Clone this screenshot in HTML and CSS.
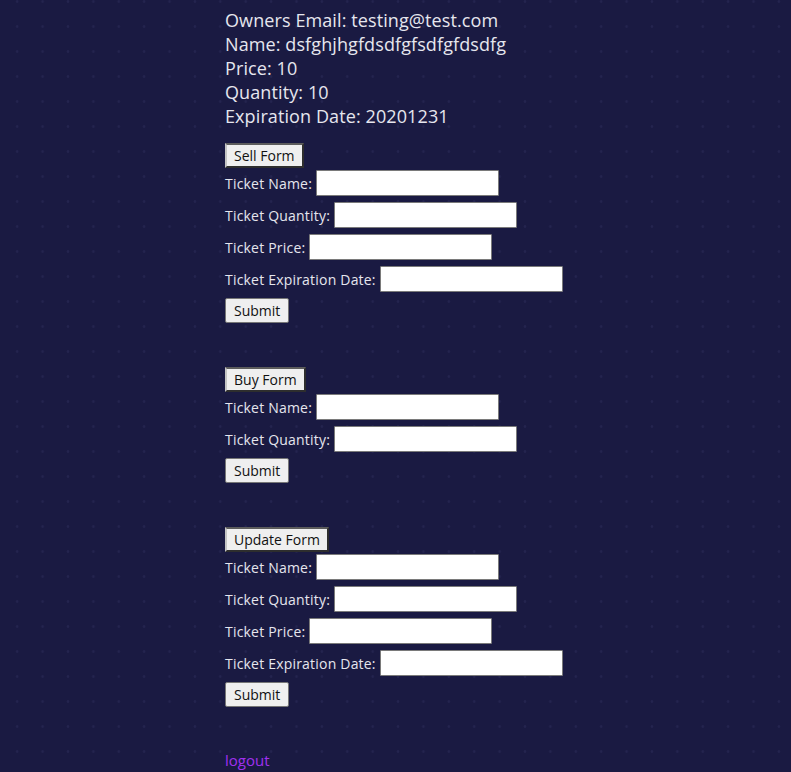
FILE: index.html
```html
<!DOCTYPE html>
<html lang="en">
<head>
<meta charset="utf-8">
<title>Tickets</title>
<link rel="stylesheet" href="styles.css">
</head>
<body>
<main class="page">
  <section class="info">
    <div>Owners Email: testing@test.com</div>
    <div>Name: dsfghjhgfdsdfgfsdfgfdsdfg</div>
    <div>Price: 10</div>
    <div>Quantity: 10</div>
    <div>Expiration Date: 20201231</div>
  </section>

  <section class="panel panel-first">
    <button class="toggle" type="button">Sell Form</button>
    <form class="ticket-form">
      <div class="row"><label>Ticket Name:</label><input type="text" class="field"></div>
      <div class="row"><label>Ticket Quantity:</label><input type="text" class="field"></div>
      <div class="row"><label>Ticket Price:</label><input type="text" class="field"></div>
      <div class="row"><label>Ticket Expiration Date:</label><input type="text" class="field"></div>
      <button class="submit" type="button">Submit</button>
    </form>
  </section>

  <section class="panel">
    <button class="toggle" type="button">Buy Form</button>
    <form class="ticket-form">
      <div class="row"><label>Ticket Name:</label><input type="text" class="field"></div>
      <div class="row"><label>Ticket Quantity:</label><input type="text" class="field"></div>
      <button class="submit" type="button">Submit</button>
    </form>
  </section>

  <section class="panel">
    <button class="toggle" type="button">Update Form</button>
    <form class="ticket-form">
      <div class="row"><label>Ticket Name:</label><input type="text" class="field"></div>
      <div class="row"><label>Ticket Quantity:</label><input type="text" class="field"></div>
      <div class="row"><label>Ticket Price:</label><input type="text" class="field"></div>
      <div class="row"><label>Ticket Expiration Date:</label><input type="text" class="field"></div>
      <button class="submit" type="button">Submit</button>
    </form>
  </section>

  <a class="logout" href="#">logout</a>
</main>
</body>
</html>
```

FILE: styles.css
```css
html {
  background-color: #1a1a42;
  background-image: radial-gradient(circle, #24244f 0, #24244f 1px, rgba(26,26,66,0) 1.6px);
  background-size: 25.4px 25px;
  background-position: 4.5px 14px;
  min-height: 100%;
}

body {
  margin: 0;
  font-family: "Open Sans", "Noto Sans", sans-serif;
  color: #e6e6ee;
}

.page {
  display: flex;
  flex-direction: column;
  align-items: flex-start;
  padding: 8px 0 0 225px;
}

.info {
  font-size: 18px;
  line-height: 24px;
  letter-spacing: 0.1px;
}

.panel {
  display: flex;
  flex-direction: column;
  align-items: flex-start;
  margin-top: 44px;
}

.panel-first {
  margin-top: 15px;
}

.toggle {
  font-family: "Open Sans", "Noto Sans", sans-serif;
  font-size: 14px;
  line-height: 21px;
  padding: 0 7px;
  color: #111;
  background: #efefef;
  border-width: 2px;
  border-style: solid;
  border-color: #5c5c5c #2e2e2e #2e2e2e #c4c4c4;
  border-radius: 0;
  margin: 0;
}

.ticket-form {
  display: flex;
  flex-direction: column;
  align-items: flex-start;
  gap: 6px;
  margin-top: 2px;
}

.row {
  display: flex;
  align-items: center;
  gap: 4px;
}

.row label {
  font-size: 14px;
  letter-spacing: 0.2px;
  line-height: 21px;
}

.field {
  width: 183px;
  height: 26px;
  box-sizing: border-box;
  border: 1px solid #7a7a7a;
  border-radius: 1px;
  background: #fff;
  margin: 0;
  padding: 1px 2px;
}

.submit {
  font-family: "Open Sans", "Noto Sans", sans-serif;
  font-size: 14px;
  line-height: 21px;
  padding: 1px 8px;
  color: #111;
  background: #efefef;
  border: 1px solid #767676;
  border-radius: 2px;
  margin: 0;
}

.logout {
  margin-top: 43px;
  font-size: 15px;
  line-height: 21px;
  color: #a030f0;
  text-decoration: none;
}
```
